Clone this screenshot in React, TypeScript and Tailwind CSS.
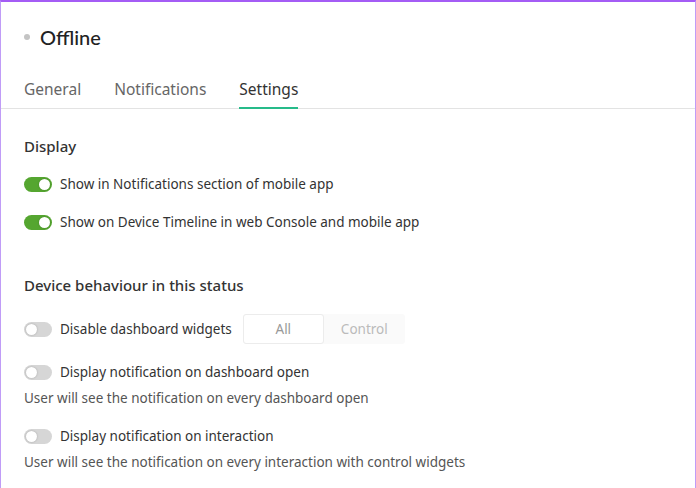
import * as React from "react";

const font = { fontFamily: '"Noto Sans", "Open Sans", sans-serif' };

function Toggle({ on }: { on: boolean }) {
  return (
    <span
      className={`relative inline-flex h-[15px] w-[28px] shrink-0 items-center rounded-full ${
        on ? "bg-[#55a630]" : "bg-[#d6d6d6]"
      }`}
    >
      <span
        className={`absolute top-[2px] h-[11px] w-[11px] rounded-full bg-white shadow-[0_0_2px_rgba(0,0,0,0.25)] ${
          on ? "left-[15px]" : "left-[2px]"
        }`}
      />
    </span>
  );
}

function Row({ on, label, children }: { on: boolean; label: string; children?: React.ReactNode }) {
  return (
    <div className="flex items-center gap-2">
      <Toggle on={on} />
      <span className="text-[13.5px] leading-[20px] text-[#333]">{label}</span>
      {children}
    </div>
  );
}

export default function App() {
  return (
    <div
      className="h-[488px] w-[696px] overflow-hidden border-x border-t-2 border-x-[#c09cf7] border-t-[#a45cf5] bg-white"
      style={font}
    >
      <div className="flex items-center gap-[10px] px-[23px] pt-[22px]">
        <span className="h-[6px] w-[6px] rounded-full bg-[#c4c4c4]" />
        <span
          className="text-[20px] font-medium leading-[26px] text-[#222]"
          style={{ fontFamily: '"Lato", "Noto Sans", sans-serif' }}
        >
          Offline
        </span>
      </div>

      <div className="mt-[28px] flex gap-[33px] border-b border-[#e3e3e3] px-[23px]">
        {["General", "Notifications", "Settings"].map((t) => (
          <div
            key={t}
            className={`-mb-px border-b-2 pb-[7px] text-[15.5px] leading-[22px] ${
              t === "Settings" ? "border-[#26bb8a] text-[#333]" : "border-transparent text-[#666]"
            }`}
          >
            {t}
          </div>
        ))}
      </div>

      <div className="px-[23px] pt-[26px]">
        <h3 className="text-[15px] font-medium leading-[22px] text-[#333]">Display</h3>
        <div className="mt-[17px] flex flex-col gap-[18px]">
          <Row on label="Show in Notifications section of mobile app" />
          <Row on label="Show on Device Timeline in web Console and mobile app" />
        </div>

        <h3 className="mt-[42px] text-[15px] font-medium leading-[22px] text-[#333]">
          Device behaviour in this status
        </h3>
        <div className="mt-[18px]">
          <Row on={false} label="Disable dashboard widgets">
            <div className="ml-[3px] flex h-[30px] rounded-[3px] bg-[#fafafa] text-[13.5px]">
              <div className="flex w-[81px] items-center justify-center rounded-[3px] border border-[#ececec] bg-white text-[#999]">
                All
              </div>
              <div className="flex w-[81px] items-center justify-center text-[#bbb]">Control</div>
            </div>
          </Row>
        </div>
        <div className="mt-[18px]">
          <Row on={false} label="Display notification on dashboard open" />
          <p className="mt-[6px] text-[13.5px] leading-[20px] text-[#555]">
            User will see the notification on every dashboard open
          </p>
        </div>
        <div className="mt-[18px]">
          <Row on={false} label="Display notification on interaction" />
          <p className="mt-[6px] text-[13.5px] leading-[20px] text-[#555]">
            User will see the notification on every interaction with control widgets
          </p>
        </div>
      </div>
    </div>
  );
}
